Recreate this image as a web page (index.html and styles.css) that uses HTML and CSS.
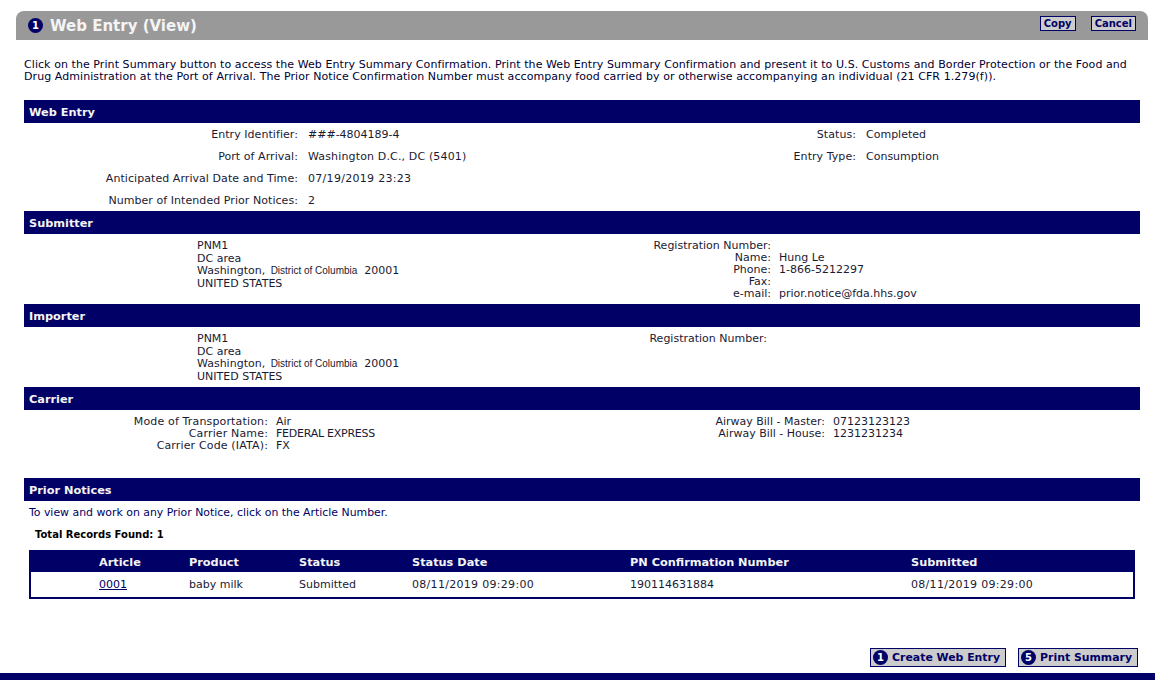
FILE: index.html
```html
<!DOCTYPE html>
<html lang="en">
<head>
  <meta charset="UTF-8" />
  <title>Web Entry (View)</title>
  <link rel="stylesheet" href="styles.css">
</head>
<body>
  <div class="page-title">
    <h1><span class="step">1</span>Web Entry (View)</h1>
    <div class="title-buttons">
      <button type="button" class="btn">Copy</button>
      <button type="button" class="btn">Cancel</button>
    </div>
  </div>

  <div class="content">
    <p class="intro">Click on the Print Summary button to access the Web Entry Summary Confirmation. Print the Web Entry Summary Confirmation and present it to U.S. Customs and Border Protection or the Food and Drug Administration at the Port of Arrival. The Prior Notice Confirmation Number must accompany food carried by or otherwise accompanying an individual (21 CFR 1.279(f)).</p>

    <!-- Web Entry -->
    <h2 class="bar">Web Entry</h2>
    <div class="entry-grid">
      <span class="lbl">Entry Identifier:</span><span>###-4804189-4</span>
      <span class="lbl">Status:</span><span>Completed</span>
      <span class="lbl">Port of Arrival:</span><span class="wide">Washington D.C., DC (5401)</span>
      <span class="lbl">Entry Type:</span><span>Consumption</span>
      <span class="lbl">Anticipated Arrival Date and Time:</span><span class="date">07/19/2019 23:23</span>
      <span></span><span></span>
      <span class="lbl">Number of Intended Prior Notices:</span><span>2</span>
    </div>

    <!-- Submitter -->
    <h2 class="bar">Submitter</h2>
    <div class="party submitter">
      <div class="address">
        <div>PNM1</div>
        <div>DC area</div>
        <div>Washington, <span class="state">District of Columbia</span>&nbsp; 20001</div>
        <div>UNITED STATES</div>
      </div>
      <div class="contact">
        <span class="lbl">Registration Number:</span><span></span>
        <span class="lbl">Name:</span><span>Hung Le</span>
        <span class="lbl">Phone:</span><span>1-866-5212297</span>
        <span class="lbl">Fax:</span><span></span>
        <span class="lbl">e-mail:</span><span>prior.notice@fda.hhs.gov</span>
      </div>
    </div>

    <!-- Importer -->
    <h2 class="bar">Importer</h2>
    <div class="party importer">
      <div class="address">
        <div>PNM1</div>
        <div>DC area</div>
        <div>Washington, <span class="state">District of Columbia</span>&nbsp; 20001</div>
        <div>UNITED STATES</div>
      </div>
      <div class="contact">
        <span class="lbl">Registration Number:</span><span></span>
      </div>
    </div>

    <!-- Carrier -->
    <h2 class="bar">Carrier</h2>
    <div class="carrier-grid">
      <span class="lbl lbl-left">Mode of Transportation:</span><span>Air</span>
      <span class="lbl">Airway Bill - Master:</span><span>07123123123</span>
      <span class="lbl lbl-left">Carrier Name:</span><span class="caps">FEDERAL EXPRESS</span>
      <span class="lbl">Airway Bill - House:</span><span>1231231234</span>
      <span class="lbl lbl-left">Carrier Code (IATA):</span><span>FX</span>
    </div>

    <!-- Prior Notices -->
    <h2 class="bar">Prior Notices</h2>
    <p class="hint">To view and work on any Prior Notice, click on the Article Number.</p>
    <p class="total">Total Records Found: 1</p>
    <table class="notices">
      <thead>
        <tr>
          <th class="c-article">Article</th>
          <th class="c-product">Product</th>
          <th class="c-status">Status</th>
          <th class="c-date">Status Date</th>
          <th class="c-pn">PN Confirmation Number</th>
          <th>Submitted</th>
        </tr>
      </thead>
      <tbody>
        <tr>
          <td><a href="#">0001</a></td>
          <td>baby milk</td>
          <td>Submitted</td>
          <td class="date">08/11/2019 09:29:00</td>
          <td>190114631884</td>
          <td class="date">08/11/2019 09:29:00</td>
        </tr>
      </tbody>
    </table>
  </div>

  <div class="actions">
    <button type="button" class="btn btn-large"><span class="step">1</span>Create Web Entry</button>
    <button type="button" class="btn btn-large"><span class="step">5</span>Print Summary</button>
  </div>
  <div class="footer-bar"></div>
</body>
</html>
```

FILE: styles.css
```css
body {
  font-family: "DejaVu Sans", Verdana, sans-serif;
  font-size: 11px;
  line-height: 12px;
  color: #1a1a33;
  background: #fff;
  margin: 0;
  padding-top: 11px;
}
/* Grey page title */
.page-title {
  display: flex;
  justify-content: space-between;
  align-items: center;
  height: 29px;
  margin: 0 7px 0 16px;
  padding: 0 12px;
  background: #999;
  border-radius: 8px 8px 0 0;
}
.page-title h1 {
  display: flex;
  align-items: center;
  margin: 0;
  font-size: 15px;
  font-weight: bold;
  color: #f4f4f4;
}
.page-title .step {
  margin-right: 7px;
}
.title-buttons {
  display: flex;
  gap: 15px;
  padding-bottom: 4px;
}
.title-buttons .btn {
  min-width: 36px;
  padding: 0 3px;
  font-size: 10px;
}
.step {
  display: inline-block;
  flex: none;
  width: 15px;
  height: 15px;
  border-radius: 50%;
  background: #000066;
  color: #fff;
  font-size: 10px;
  font-weight: bold;
  line-height: 15px;
  text-align: center;
}
.btn {
  height: 15px;
  padding: 0 4px;
  font-family: inherit;
  font-size: 10.5px;
  font-weight: bold;
  line-height: 12px;
  color: #000066;
  background: #ccc;
  border: 1px solid #000066;
  cursor: pointer;
}
.content {
  margin: 0 15px 0 24px;
}
.intro {
  margin: 19px 0 17px;
  letter-spacing: .07px;
  color: #000033;
}
.bar {
  margin: 0;
  height: 23px;
  padding-left: 5px;
  font-size: 11.3px;
  line-height: 25px;
  font-weight: bold;
  color: #f4f4f4;
  background: #000066;
}
.lbl {
  padding-right: 10px;
  text-align: right;
  white-space: nowrap;
}
.wide {
  letter-spacing: .15px;
}
.date {
  letter-spacing: .3px;
}
.caps {
  letter-spacing: -.25px;
}
.entry-grid {
  display: grid;
  grid-template-columns: 284px 274px 284px 1fr;
  grid-auto-rows: 22px;
  align-items: center;
  height: 88px;
  padding-top: 1px;
  box-sizing: border-box;
}
.entry-grid .lbl {
  letter-spacing: .06px;
}
.party {
  display: flex;
  padding: 6px 0 0 173px;
  box-sizing: border-box;
}
.submitter {
  height: 70px;
}
.importer {
  height: 60px;
}
.address {
  flex: none;
  width: 300px;
  line-height: 12.6px;
  white-space: nowrap;
}
.state {
  margin-left: 2px;
  font-family: "Liberation Sans", Arial, sans-serif;
  font-size: 10px;
}
.contact {
  display: grid;
  grid-template-columns: 282px 1fr;
  align-content: start;
}
.contact .lbl {
  padding-right: 8px;
}
.importer .contact {
  grid-template-columns: 278px 1fr;
}
.carrier-grid {
  display: grid;
  grid-template-columns: 252px 417px 140px 1fr;
  grid-auto-rows: 12px;
  height: 68px;
  padding-top: 6px;
  box-sizing: border-box;
}
.carrier-grid .lbl {
  padding-right: 8px;
}
.carrier-grid .lbl-left {
  letter-spacing: .15px;
}
.hint {
  margin: 6px 0 10px 5px;
  font-size: 10.9px;
  color: #000066;
}
.total {
  margin: 0 0 9px 11px;
  font-size: 10px;
  font-weight: bold;
  color: #000;
}
.notices {
  width: 1106px;
  margin-left: 5px;
  border-collapse: collapse;
  border: 2px solid #000066;
}
.notices th {
  height: 21px;
  padding: 1px 0 0;
  box-sizing: border-box;
  text-align: left;
  font-size: 11.3px;
  font-weight: bold;
  color: #f4f4f4;
  background: #000066;
}
.notices td {
  height: 25px;
  padding: 0;
}
.notices th:first-child,
.notices td:first-child {
  padding-left: 68px;
}
.notices a {
  color: #000066;
}
.c-article { width: 159px; }
.c-product { width: 110px; }
.c-status { width: 113px; }
.c-date { width: 218px; }
.c-pn { width: 281px; }
/* Bottom buttons */
.actions {
  display: flex;
  justify-content: flex-end;
  gap: 12px;
  margin: 49px 17px 6px 0;
}
.btn-large {
  display: flex;
  align-items: center;
  height: 19px;
  padding: 0 5px 0 2px;
  font-size: 10.9px;
}
.btn-large .step {
  margin-right: 4px;
}
.footer-bar {
  height: 7px;
  background: #000066;
}
```
